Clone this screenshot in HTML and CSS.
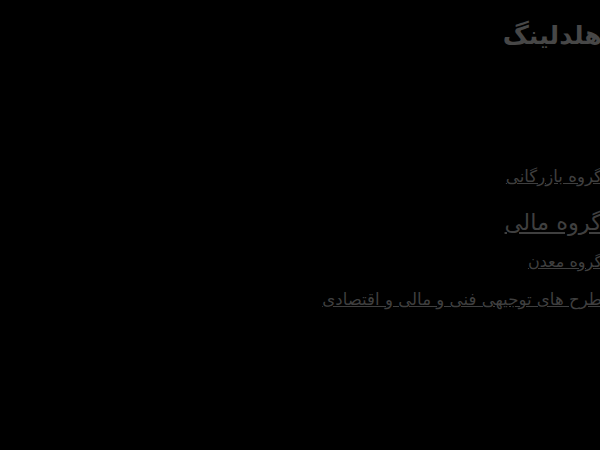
FILE: index.html
```html
<!DOCTYPE html>
<html lang="fa" dir="rtl">
<head>
<meta charset="utf-8">
<link rel="stylesheet" href="styles.css">
</head>
<body>
<div class="page">
  <h1 class="title">هلدلینگ</h1>
  <ul class="menu">
    <li class="item item-md item-first"><a href="#">گروه بازرگانی</a></li>
    <li class="item item-lg"><a href="#">گروه مالی</a></li>
    <li class="item item-sm"><a href="#">گروه معدن</a></li>
    <li class="item item-md item-last"><a href="#">طرح های توجیهی فنی و مالی و اقتصادی</a></li>
  </ul>
</div>
</body>
</html>
```
FILE: styles.css
```css
html, body {
  margin: 0;
  padding: 0;
  background: #000;
  height: 100%;
}
body {
  font-family: "DejaVu Sans", sans-serif;
  color: #444;
}
.page {
  padding: 20px 0 0 0;
  margin-right: -2px;
}
.title {
  margin: 0;
  font-size: 25.5px;
  font-weight: bold;
  color: #474747;
  line-height: 30px;
}
.menu {
  list-style: none;
  margin: 117px 0 0 0;
  padding: 0;
  display: flex;
  flex-direction: column;
}
.item a {
  color: #3f3f3f;
  text-decoration: underline;
}
.item-md { font-size: 16.6px; line-height: 20px; }
.item-lg { font-size: 22.5px; line-height: 26px; margin-top: 22px; }
.item-sm { font-size: 16px; line-height: 19px; margin-top: 17px; }
.item-last { margin-top: 19px; }
```
